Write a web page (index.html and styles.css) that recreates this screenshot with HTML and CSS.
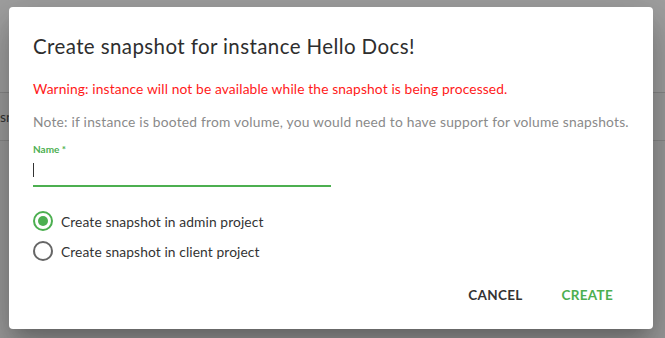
FILE: index.html
```html
<!DOCTYPE html>
<html>
<head>
<meta charset="utf-8">
<link rel="stylesheet" href="styles.css">
</head>
<body>
<div class="behind">
  <div class="row row-top"></div>
  <div class="row row-mid"><span class="peek">sn</span></div>
  <div class="row row-rest"></div>
</div>
<div class="dialog">
  <h2 class="title">Create snapshot for instance Hello Docs!</h2>
  <p class="warning">Warning: instance will not be available while the snapshot is being processed.</p>
  <p class="note">Note: if instance is booted from volume, you would need to have support for volume snapshots.</p>
  <div class="field">
    <label class="label">Name *</label>
    <div class="input"><span class="caret"></span></div>
  </div>
  <div class="radios">
    <div class="radio">
      <svg class="radio-icon checked" viewBox="0 0 24 24" width="24" height="24"><circle cx="12" cy="12" r="9" fill="none" stroke="currentColor" stroke-width="2"/><circle cx="12" cy="12" r="5" fill="currentColor"/></svg>
      <span class="radio-label">Create snapshot in admin project</span>
    </div>
    <div class="radio">
      <svg class="radio-icon" viewBox="0 0 24 24" width="24" height="24"><circle cx="12" cy="12" r="9" fill="none" stroke="currentColor" stroke-width="2"/></svg>
      <span class="radio-label">Create snapshot in client project</span>
    </div>
  </div>
  <div class="actions">
    <button class="btn btn-cancel">CANCEL</button>
    <button class="btn btn-create">CREATE</button>
  </div>
</div>
</body>
</html>
```

FILE: styles.css
```css
html, body {
  margin: 0;
  padding: 0;
  width: 665px;
  height: 338px;
  overflow: hidden;
  background: #9c9c9c;
  font-family: "Lato", "Liberation Sans", sans-serif;
}

.behind {
  display: flex;
  flex-direction: column;
  height: 338px;
}

.row {
  border-bottom: 1px solid #888888;
}

.row-top {
  height: 92px;
  background: #a0a0a0;
}

.row-mid {
  height: 47px;
  display: flex;
  align-items: center;
  background: #9c9c9c;
}

.peek {
  font-size: 14px;
  color: #333;
  margin-left: 0;
}

.row-rest {
  flex: 1;
  border-bottom: none;
  background: #9a9a9a;
}

.dialog {
  position: absolute;
  left: 9px;
  top: 7px;
  width: 644px;
  height: 322px;
  box-sizing: border-box;
  padding: 0 24px;
  background: #ffffff;
  border-radius: 4px;
  box-shadow: 0 11px 15px -7px rgba(0,0,0,0.2), 0 24px 38px 3px rgba(0,0,0,0.14), 0 9px 46px 8px rgba(0,0,0,0.12);
  display: flex;
  flex-direction: column;
}

.title {
  margin: 27px 0 0;
  font-size: 20.5px;
  line-height: 24px;
  font-weight: 400;
  letter-spacing: 0.4px;
  color: #2e2e2e;
}

.warning {
  margin: 22px 0 0;
  font-size: 13.8px;
  line-height: 18px;
  letter-spacing: 0.12px;
  color: #ff1a1a;
}

.note {
  margin: 15px 0 0;
  font-size: 13.8px;
  line-height: 18px;
  letter-spacing: 0.22px;
  color: #8a8a8a;
}

.field {
  margin-top: 12px;
  width: 298px;
  display: flex;
  flex-direction: column;
}

.label {
  font-size: 10px;
  line-height: 12px;
  font-weight: 700;
  color: #4caf50;
}

.input {
  height: 32px;
  border-bottom: 2px solid #4caf50;
  display: flex;
  align-items: flex-start;
  padding-top: 8px;
  box-sizing: border-box;
}

.caret {
  width: 1px;
  height: 14px;
  background: #333;
}

.radios {
  margin-top: 22px;
  display: flex;
  flex-direction: column;
  gap: 6px;
}

.radio {
  display: flex;
  align-items: center;
  gap: 6px;
  margin-left: -2px;
  height: 24px;
}

.radio-icon {
  color: #666666;
  display: block;
}

.radio-icon.checked {
  color: #4caf50;
}

.radio-label {
  font-size: 13.8px;
  letter-spacing: 0.1px;
  color: #333333;
}

.actions {
  margin-top: auto;
  margin-bottom: 20px;
  display: flex;
  justify-content: flex-end;
  gap: 23px;
  margin-right: 8px;
}

.btn {
  border: none;
  background: none;
  padding: 6px 8px;
  font-family: inherit;
  font-size: 13.5px;
  font-weight: 700;
  letter-spacing: 0.3px;
  cursor: pointer;
}

.btn-cancel {
  color: #333333;
}

.btn-create {
  color: #4caf50;
}
```
